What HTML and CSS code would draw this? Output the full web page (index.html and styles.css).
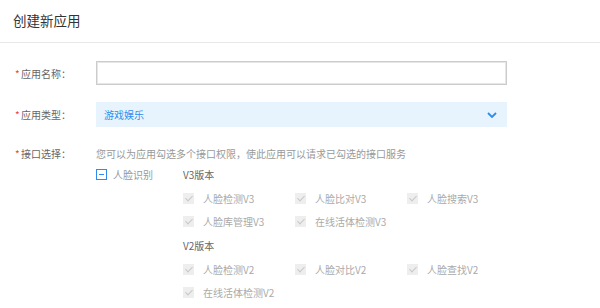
FILE: index.html
```
<!DOCTYPE html>
<html lang="zh-CN">
<head>
    <meta charset="UTF-8">
    <meta name="viewport" content="width=device-width, initial-scale=1.0">
    <title>创建新应用</title>
    <link rel="stylesheet" href="styles.css">
</head>
<body>
    <header class="page-header">创建新应用</header>

    <form class="app-form">
        <div class="form-row">
            <label class="form-label required" for="app-name">应用名称：</label>
            <input class="text-input" type="text" id="app-name">
        </div>

        <div class="form-row">
            <label class="form-label required">应用类型：</label>
            <div class="select-box">
                <span>游戏娱乐</span>
                <svg class="chevron" width="10" height="6" viewBox="0 0 10 6">
                    <polyline points="1,1 5,5 9,1" fill="none" stroke="#2d8cf0" stroke-width="1.8"/>
                </svg>
            </div>
        </div>

        <div class="form-row api-row">
            <label class="form-label required">接口选择：</label>
            <div class="api-body">
                <p class="hint">您可以为应用勾选多个接口权限，使此应用可以请求已勾选的接口服务</p>
                <div class="api-group">
                    <div class="group-check">
                        <span class="box indeterminate"></span>
                        <span>人脸识别</span>
                    </div>
                    <div class="versions">
                        <div class="version-title">V3版本</div>
                        <div class="check-grid">
                            <div class="check-item"><span class="box checked"></span>人脸检测V3</div>
                            <div class="check-item"><span class="box checked"></span>人脸比对V3</div>
                            <div class="check-item"><span class="box checked"></span>人脸搜索V3</div>
                            <div class="check-item"><span class="box checked"></span>人脸库管理V3</div>
                            <div class="check-item"><span class="box checked"></span>在线活体检测V3</div>
                        </div>
                        <div class="version-title">V2版本</div>
                        <div class="check-grid">
                            <div class="check-item"><span class="box checked"></span>人脸检测V2</div>
                            <div class="check-item"><span class="box checked"></span>人脸对比V2</div>
                            <div class="check-item"><span class="box checked"></span>人脸查找V2</div>
                            <div class="check-item"><span class="box checked"></span>在线活体检测V2</div>
                        </div>
                    </div>
                </div>
            </div>
        </div>
    </form>
</body>
</html>
```

FILE: styles.css
```
* {
    box-sizing: border-box;
    margin: 0;
    padding: 0;
}

body {
    font-family: "Noto Sans CJK SC", "Liberation Sans", sans-serif;
    font-size: 10px;
    color: #666;
    background: #fff;
    overflow: hidden;
}

.page-header {
    height: 43px;
    line-height: 41px;
    padding-left: 13px;
    font-size: 13.5px;
    color: #333;
    border-bottom: 1px solid #e8e8e8;
}

.app-form {
    padding-top: 18px;
}

.form-row {
    display: flex;
    align-items: center;
    margin-bottom: 17px;
}

.form-label {
    width: 96px;
    flex-shrink: 0;
    padding-left: 21px;
    position: relative;
    color: #666;
}

.required::before {
    content: "*";
    color: #f04134;
    position: absolute;
    left: 15px;
    top: 0;
}

.text-input {
    width: 411px;
    height: 24px;
    border: 1px solid #ccc;
    box-shadow: inset 0 0 0 1px #e6e6e6;
    outline: none;
}

.select-box {
    width: 411px;
    height: 25px;
    background: #e8f4fd;
    display: flex;
    align-items: center;
    justify-content: space-between;
    padding: 0 10px 0 8px;
    color: #2d8cf0;
}

.api-row {
    align-items: flex-start;
    margin-top: 19px;
}

.api-row .form-label,
.hint {
    line-height: 16px;
}

.hint {
    color: #999;
}

.api-group {
    display: flex;
    padding-top: 1px;
}

.group-check {
    width: 87px;
    height: 23px;
    display: flex;
    align-items: center;
    gap: 6px;
    color: #999;
}

.version-title {
    height: 23px;
    line-height: 23px;
    color: #666;
}

.check-grid {
    display: grid;
    grid-template-columns: repeat(3, 112px);
    margin: 1px 0;
}

.check-item {
    height: 23px;
    display: flex;
    align-items: center;
    gap: 9px;
    color: #aaa;
}

.box {
    width: 11px;
    height: 11px;
    display: inline-block;
    position: relative;
    flex-shrink: 0;
}

.box.indeterminate {
    border: 1px solid #2d8cf0;
    background: #fff;
}

.box.indeterminate::after {
    content: "";
    position: absolute;
    left: 2px;
    right: 2px;
    top: 4px;
    height: 1px;
    background: #2d8cf0;
}

.box.checked {
    background: #eee;
}

.box.checked::after {
    content: "";
    position: absolute;
    left: 4px;
    top: 1px;
    width: 3px;
    height: 6px;
    border-right: 1px solid #c8c8c8;
    border-bottom: 1px solid #c8c8c8;
    transform: rotate(45deg);
}
```
